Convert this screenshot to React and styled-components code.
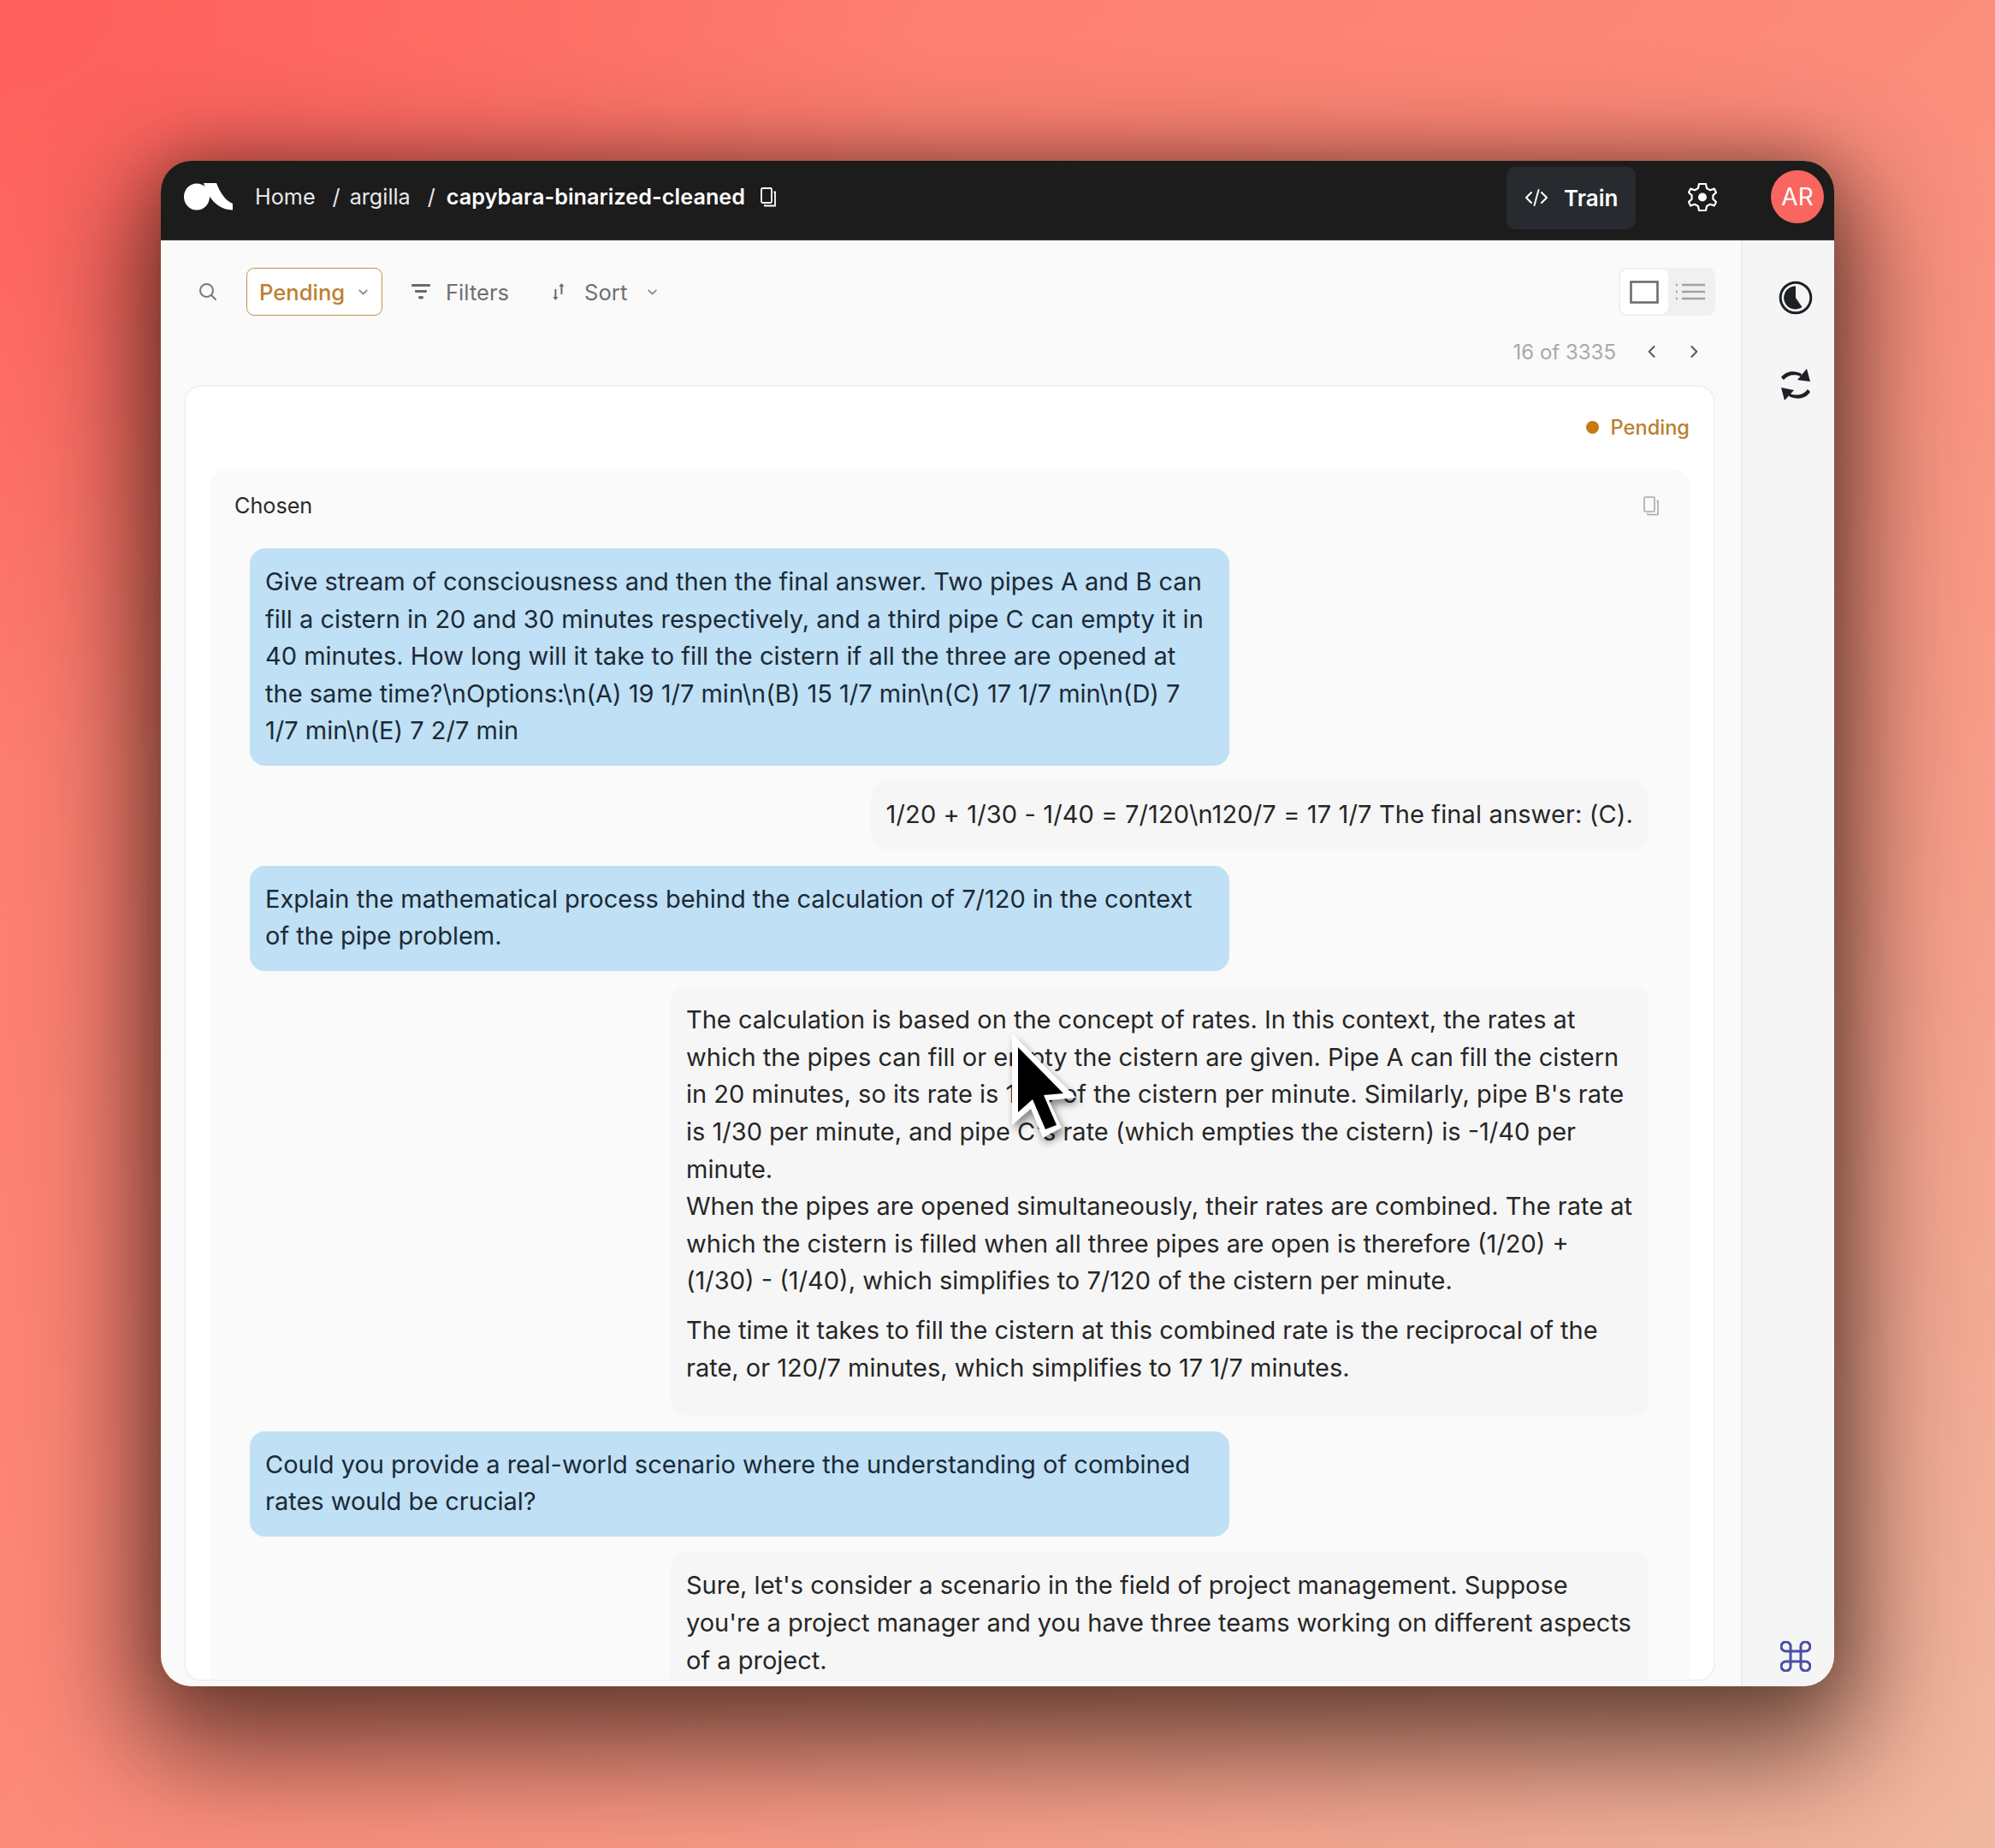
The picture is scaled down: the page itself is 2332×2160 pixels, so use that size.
import React from "react";
import styled, { createGlobalStyle } from "styled-components";

const Global = createGlobalStyle`
  html, body { margin: 0; padding: 0; }
  body { font-family: Inter, "Liberation Sans", sans-serif; }
  * { box-sizing: border-box; }
`;

const Page = styled.div`
  width: 2332px;
  height: 2160px;
  padding: 188px 188px 189px;
  overflow: hidden;
  background:
    radial-gradient(ellipse 1100px 900px at 0% 0%, #ff5f5c 0%, rgba(255,110,100,0) 100%),
    linear-gradient(135deg, #fd7669 0%, #fd8878 45%, #f89c88 70%, #f0b8a0 100%);
`;

const Window = styled.div`
  position: relative;
  width: 1956px;
  height: 1783px;
  border-radius: 36px;
  overflow: hidden;
  display: flex;
  flex-direction: column;
  box-shadow: 0 50px 130px 30px rgba(50, 30, 20, 0.68), 0 0 60px rgba(50, 20, 10, 0.3);
`;

const Header = styled.header`
  flex: none;
  height: 93px;
  background: #1c1c1c;
  display: flex;
  align-items: center;
  padding: 0 12px 8px 27px;
  color: #fff;
  font-size: 25.2px;
  border-bottom: 1px solid #3a3a3a;
`;

const Crumbs = styled.nav`
  display: flex;
  align-items: center;
  margin-left: 25px;
  flex: 1;
`;

const Crumb = styled.span`
  color: #e9e9e9;
  margin-right: ${(p) => p.$gap}px;
`;

const CrumbStrong = styled.span`
  font-weight: 600;
  color: #fff;
  margin-right: 17px;
  letter-spacing: 0.05px;
`;

const TrainButton = styled.div`
  width: 151px;
  height: 73px;
  margin-top: 2px;
  border-radius: 10px;
  background: #272a2e;
  display: flex;
  align-items: center;
  padding-left: 21px;
  gap: 18px;
  font-weight: 600;
  font-size: 26px;
`;

const GearSlot = styled.div`
  margin: 0 63px 0 61px;
  display: flex;
`;

const Avatar = styled.div`
  width: 62px;
  height: 62px;
  border-radius: 50%;
  background: #f9655f;
  display: flex;
  align-items: center;
  justify-content: center;
  font-size: 28px;
  font-weight: 400;
`;

const Body = styled.div`
  flex: 1;
  min-height: 0;
  display: flex;
`;

const Main = styled.main`
  flex: 1;
  min-width: 0;
  background: #fafafa;
  padding: 32px 30px 6px 27px;
  display: flex;
  flex-direction: column;
`;

const Side = styled.aside`
  flex: none;
  width: 109px;
  background: #f5f5f6;
  border-left: 2px solid #ececec;
  display: flex;
  flex-direction: column;
  align-items: center;
  padding: 47px 0 17px 16px;
`;

const SideSpacer = styled.div`
  flex: 1;
`;

const SideIcon = styled.div`
  display: flex;
  margin-bottom: ${(p) => p.$mb || 0}px;
`;

const Toolbar = styled.div`
  height: 56px;
  flex: none;
  display: flex;
  align-items: center;
  color: #6f6f6f;
  font-size: 25.6px;
`;

const SearchSlot = styled.div`
  display: flex;
  margin: 0 33px 0 16px;
`;

const StatusButton = styled.div`
  width: 159px;
  height: 56px;
  background: #fff;
  border: 1.5px solid #c0924a;
  border-radius: 9px;
  color: #bc8030;
  font-weight: 500;
  display: flex;
  align-items: center;
  padding-left: 14px;
  gap: 15px;
`;

const ToolItem = styled.div`
  display: flex;
  align-items: center;
  gap: ${(p) => p.$gap}px;
  margin-left: ${(p) => p.$ml}px;
`;

const Spacer = styled.div`
  flex: 1;
`;

const Toggle = styled.div`
  width: 113px;
  height: 56px;
  border-radius: 9px;
  background: #f0f0f0;
  display: flex;
`;

const ToggleCell = styled.div`
  width: ${(p) => (p.$active ? 56 : 47)}px;
  height: 52px;
  margin: 2px 0 2px 2px;
  border-radius: 8px;
  background: ${(p) => (p.$active ? "#fff" : "transparent")};
  display: flex;
  align-items: center;
  justify-content: center;
`;

const Pager = styled.div`
  flex: none;
  height: 30px;
  margin-top: 27px;
  display: flex;
  align-items: center;
  justify-content: flex-end;
  color: #a9a9a9;
  font-size: 24px;
  padding-right: 17px;
`;

const PagerButton = styled.div`
  display: flex;
  margin-left: ${(p) => p.$ml}px;
`;

const Card = styled.section`
  flex: 1;
  min-height: 0;
  margin-top: 24px;
  background: #fff;
  border: 2px solid #f1f1f1;
  border-radius: 20px;
  padding: 30px 28px 0 29px;
  overflow: hidden;
`;

const StatusTag = styled.div`
  display: flex;
  align-items: center;
  justify-content: flex-end;
  height: 34px;
  color: #bc8030;
  font-size: 23.6px;
  font-weight: 500;
  gap: 14px;
`;

const Dot = styled.span`
  width: 15px;
  height: 15px;
  border-radius: 50%;
  background: #c77a0e;
`;

const Section = styled.div`
  margin-top: 32px;
  background: #fafafa;
  border-radius: 20px 20px 0 0;
  padding: 26px 48px 0 46px;
  min-height: 1500px;
`;

const SectionHead = styled.div`
  display: flex;
  align-items: center;
  justify-content: space-between;
  height: 34px;
  margin: 0 -13px 33px -18px;
  color: #2b2b2b;
  font-size: 25.2px;
`;

const Thread = styled.div`
  display: flex;
  flex-direction: column;
  gap: 18.5px;
`;

const Bubble = styled.div`
  font-size: 29px;
  line-height: 43.6px;
  letter-spacing: ${(p) => p.$ls || "0"};
  color: ${(p) => (p.$user ? "#1b2a36" : "#262626")};
  border-radius: 18px;
  padding: 17px 18px 19px;
  background: ${(p) => (p.$user ? "#bfe0f5" : "#f6f6f6")};
  align-self: ${(p) => (p.$user ? "flex-start" : "flex-end")};
  width: ${(p) => p.$w};
`;

const Para = styled.p`
  margin: 0 0 ${(p) => p.$mb || 0}px;
`;

const Cursor = styled.svg`
  position: absolute;
  left: 990px;
  top: 1014px;
  filter: drop-shadow(3px 6px 5px rgba(0, 0, 0, 0.45));
`;

const Logo = () => (
  <svg width="58" height="32" viewBox="0 0 58 32">
    <ellipse cx="15" cy="16" rx="15" ry="15.5" fill="#fff" />
    <path d="M23 0 H38 C41 8 47 20 57 24 V31.5 C42 31 30 22 23 0 Z" fill="#fff" />
  </svg>
);

const Copy = ({ c = "#fff", w = 1.8 }) => (
  <svg width="20" height="24" viewBox="0 0 20 24" fill="none" stroke={c} strokeWidth={w}>
    <rect x="2" y="2" width="12" height="17" rx="1.5" />
    <path d="M16.5 6.5 H18 V22.5 H6 V21" />
  </svg>
);

const Chevron = ({ dir = "down", size = 13, c = "#8a8a8a", w = 1.6 }) => {
  const d = {
    down: "M2 4 L6 8 L10 4",
    left: "M8 1.5 L3.5 6 L8 10.5",
    right: "M4 1.5 L8.5 6 L4 10.5",
  }[dir];
  return (
    <svg width={size} height={size} viewBox="0 0 12 12" fill="none" stroke={c} strokeWidth={w} strokeLinecap="round" strokeLinejoin="round">
      <path d={d} />
    </svg>
  );
};

const Search = () => (
  <svg width="24" height="24" viewBox="0 0 24 24" fill="none" stroke="#777" strokeWidth="2" strokeLinecap="round">
    <circle cx="10.5" cy="10.5" r="7.5" />
    <path d="M16 16 L21 21" />
  </svg>
);

const FilterIcon = () => (
  <svg width="22" height="20" viewBox="0 0 22 20" fill="#6a6a6a">
    <rect x="0" y="1" width="22" height="3" rx="1" />
    <rect x="4" y="8" width="14" height="3" rx="1" />
    <rect x="8" y="15" width="6" height="3.4" rx="1.6" />
  </svg>
);

const SortIcon = () => (
  <svg width="14" height="22" viewBox="0 0 14 22" fill="#6a6a6a">
    <path d="M2.4 8 H4.4 V17 H6.4 L3.4 21 L0.4 17 H2.4 Z" />
    <path d="M9.4 14 H11.4 V5 H13.4 L10.4 1 L7.4 5 H9.4 Z" />
  </svg>
);

const CodeIcon = () => (
  <svg width="28" height="22" viewBox="0 0 28 22" fill="none" stroke="#fff" strokeWidth="2" strokeLinecap="round" strokeLinejoin="round">
    <path d="M8 5 L2 11 L8 17" />
    <path d="M20 5 L26 11 L20 17" />
    <path d="M16.5 2 L11.5 20" />
  </svg>
);

const Gear = () => (
  <svg width="34" height="35" viewBox="0 0 34 35" fill="none">
    <path
      d="M13 2 H21 L22 7 L26 9.2 L30.8 7.6 L33 12 L29.4 15.4 V19.6 L33 23 L30.8 27.4 L26 25.8 L22 28 L21 33 H13 L12 28 L8 25.8 L3.2 27.4 L1 23 L4.6 19.6 V15.4 L1 12 L3.2 7.6 L8 9.2 L12 7 Z"
      stroke="#fff"
      strokeWidth="2.2"
      strokeLinejoin="round"
    />
    <circle cx="17" cy="17.5" r="5" fill="#fff" />
  </svg>
);

const SingleIcon = () => (
  <svg width="34" height="27" viewBox="0 0 34 27" fill="none" stroke="#6d6d6d" strokeWidth="2.6">
    <rect x="1.5" y="1.5" width="31" height="24" />
  </svg>
);

const ListIcon = () => (
  <svg width="34" height="22" viewBox="0 0 34 22" fill="none" stroke="#a2a2a2" strokeWidth="2.4">
    <path d="M7 3 H34 M7 11 H34 M7 19 H34" />
    <path d="M0 3 H2 M0 11 H2 M0 19 H2" />
  </svg>
);

const Clock = () => (
  <svg width="40" height="40" viewBox="0 0 40 40">
    <circle cx="20" cy="20" r="17.8" fill="none" stroke="#1d2126" strokeWidth="3" />
    <path d="M20 6.5 V20 L27.5 31 A13.5 13.5 0 1 1 20 6.5 Z" fill="#1d2126" />
  </svg>
);

const Refresh = () => (
  <svg width="38" height="40" viewBox="0 0 38 40" fill="#1d2126">
    <path d="M2 11 C7 4 17 2 26 7 L25 10 C18 7 10 8 5 14 Z" />
    <path d="M32 1 L36 16 L21 14 Z" />
    <path d="M36 28 C31 36 21 38 11 33 L12 30 C20 33 28 32 33 25 Z" />
    <path d="M2 23 L17 26 L6 38 Z" />
  </svg>
);

const Cmd = () => (
  <svg width="36" height="36" viewBox="0 0 36 36" fill="none" stroke="#4a4fa3" strokeWidth="3">
    <path d="M12 12 H24 V24 H12 Z" />
    <path d="M12 12 V7.5 A5.5 5.5 0 1 0 6.5 12 H12" />
    <path d="M24 12 V7.5 A5.5 5.5 0 1 1 29.5 12 H24" />
    <path d="M12 24 V28.5 A5.5 5.5 0 1 1 6.5 24 H12" />
    <path d="M24 24 V28.5 A5.5 5.5 0 1 0 29.5 24 H24" />
  </svg>
);

const user1 =
  "Give stream of consciousness and then the final answer. Two pipes A and B can fill a cistern in 20 and 30 minutes respectively, and a third pipe C can empty it in 40 minutes. How long will it take to fill the cistern if all the three are opened at the same time?\\nOptions:\\n(A) 19 1/7 min\\n(B) 15 1/7 min\\n(C) 17 1/7 min\\n(D) 7 1/7 min\\n(E) 7 2/7 min";

export default function App() {
  return (
    <Page>
      <Global />
      <Window>
        <Header>
          <Logo />
          <Crumbs>
            <Crumb $gap={20}>Home</Crumb>
            <Crumb $gap={11}>/</Crumb>
            <Crumb $gap={20}>argilla</Crumb>
            <Crumb $gap={13}>/</Crumb>
            <CrumbStrong>capybara-binarized-cleaned</CrumbStrong>
            <Copy />
          </Crumbs>
          <TrainButton>
            <CodeIcon />
            Train
          </TrainButton>
          <GearSlot>
            <Gear />
          </GearSlot>
          <Avatar>AR</Avatar>
        </Header>
        <Body>
          <Main>
            <Toolbar>
              <SearchSlot>
                <Search />
              </SearchSlot>
              <StatusButton>
                Pending
                <Chevron />
              </StatusButton>
              <ToolItem $gap={18} $ml={34}>
                <FilterIcon />
                Filters
              </ToolItem>
              <ToolItem $gap={23} $ml={51}>
                <SortIcon />
                Sort
                <Chevron />
              </ToolItem>
              <Spacer />
              <Toggle>
                <ToggleCell $active>
                  <SingleIcon />
                </ToggleCell>
                <ToggleCell>
                  <ListIcon />
                </ToggleCell>
              </Toggle>
            </Toolbar>
            <Pager>
              16 of 3335
              <PagerButton $ml={34}>
                <Chevron dir="left" size={16} c="#555" w={1.4} />
              </PagerButton>
              <PagerButton $ml={33}>
                <Chevron dir="right" size={16} c="#555" w={1.4} />
              </PagerButton>
            </Pager>
            <Card>
              <StatusTag>
                <Dot />
                Pending
              </StatusTag>
              <Section>
                <SectionHead>
                  Chosen
                  <Copy c="#a8a8a8" w={1.6} />
                </SectionHead>
                <Thread>
                  <Bubble $user $w="1145px">{user1}</Bubble>
                  <Bubble $ls="0.13px">1/20 + 1/30 - 1/40 = 7/120\n120/7 = 17 1/7 The final answer: (C).</Bubble>
                  <Bubble $user $w="1145px">
                    Explain the mathematical process behind the calculation of 7/120 in the context of the pipe problem.
                  </Bubble>
                  <Bubble $w="1143px">
                    <Para>
                      The calculation is based on the concept of rates. In this context, the rates at which the pipes can fill or empty the cistern are given. Pipe A can fill the cistern in 20 minutes, so its rate is 1/20 of the cistern per minute. Similarly, pipe B's rate is 1/30 per minute, and pipe C's rate (which empties the cistern) is -1/40 per minute.
                    </Para>
                    <Para $mb={14}>
                      When the pipes are opened simultaneously, their rates are combined. The rate at which the cistern is filled when all three pipes are open is therefore (1/20) + (1/30) - (1/40), which simplifies to 7/120 of the cistern per minute.
                    </Para>
                    <Para $mb={15}>
                      The time it takes to fill the cistern at this combined rate is the reciprocal of the rate, or 120/7 minutes, which simplifies to 17 1/7 minutes.
                    </Para>
                  </Bubble>
                  <Bubble $user $w="1145px">
                    Could you provide a real-world scenario where the understanding of combined rates would be crucial?
                  </Bubble>
                  <Bubble $w="1143px">
                    <Para>
                      Sure, let's consider a scenario in the field of project management. Suppose you're a project manager and you have three teams working on different aspects of a project.
                    </Para>
                  </Bubble>
                </Thread>
              </Section>
            </Card>
          </Main>
          <Side>
            <SideIcon $mb={62}>
              <Clock />
            </SideIcon>
            <SideIcon>
              <Refresh />
            </SideIcon>
            <SideSpacer />
            <SideIcon>
              <Cmd />
            </SideIcon>
          </Side>
        </Body>
        <Cursor width="84" height="128" viewBox="0 0 84 128">
          <path d="M5 6 L80 81 L48 84 L63 116 L41 128 L27 94 L5 113 Z" fill="#fff" />
          <path d="M12 22 L65 76 L42 78 L57 113 L44 118 L29 83 L12 98 Z" fill="#000" />
        </Cursor>
      </Window>
    </Page>
  );
}
